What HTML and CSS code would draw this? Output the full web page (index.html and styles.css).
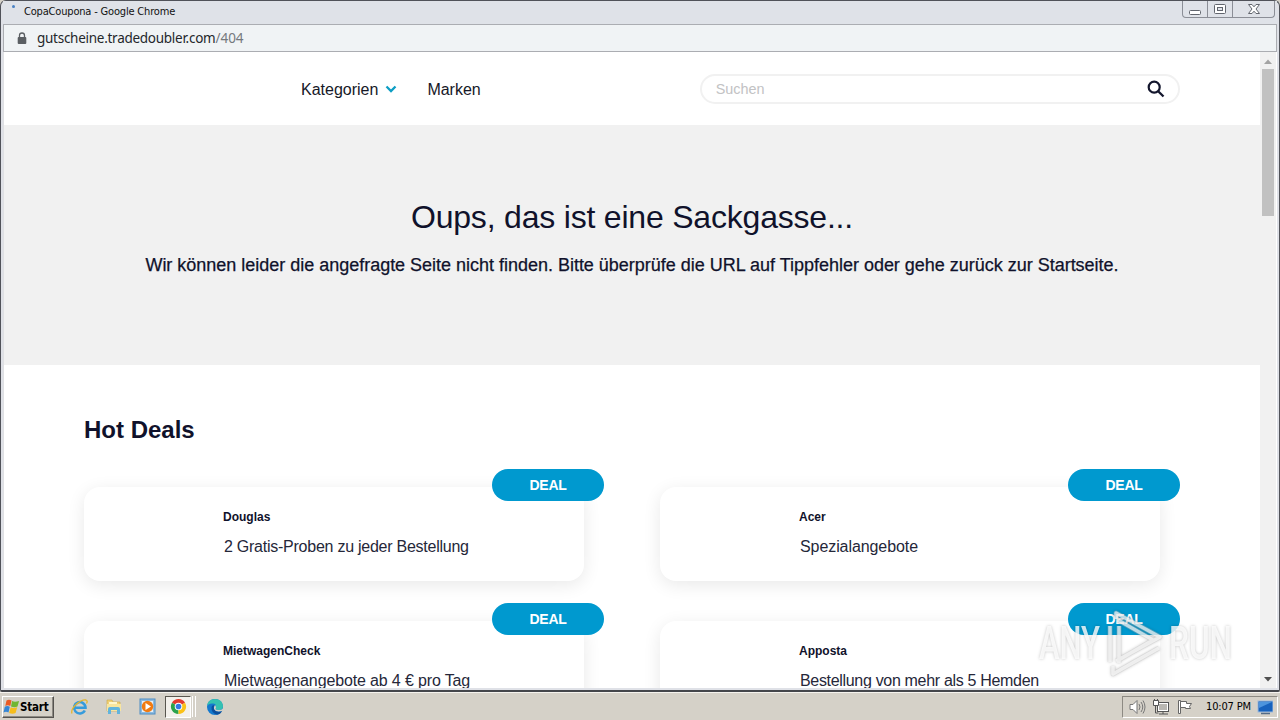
FILE: index.html
```html
<!DOCTYPE html>
<html lang="de">
<head>
<meta charset="utf-8">
<title>CopaCoupona</title>
<link rel="stylesheet" href="styles.css">
</head>
<body>
<div class="desktop">
  <div class="window">
    <div class="titlebar">
      <span class="spinner"></span>
      <span class="title">CopaCoupona - Google Chrome</span>
      <div class="controls">
        <span class="control"><svg width="14" height="14" viewBox="0 0 14 14"><rect x="1.500" y="8.500" width="11" height="4" rx="1" fill="#fff" stroke="#62666e"/></svg></span>
        <span class="control"><svg width="14" height="14" viewBox="0 0 14 14"><rect x="1.500" y="2.500" width="11" height="9" rx="1" fill="#fff" stroke="#62666e"/><rect x="4.500" y="5.500" width="5" height="3" fill="#e1e4ea" stroke="#62666e"/></svg></span>
        <span class="control control-close"><svg width="14" height="14" viewBox="0 0 14 14"><path d="M1.500 2.500h3.500l2 2.300 2-2.300h3.500L9 7l3.500 4.500H9L7 9.200 5 11.500H1.500L5 7z" fill="#fff" stroke="#62666e"/></svg></span>
      </div>
    </div>
    <div class="addressbar">
      <svg class="lock" width="10" height="13" viewBox="0 0 10 13"><path d="M2.500 6V3.500a2.500 2.500 0 0 1 5 0V6" fill="none" stroke="#5b5f63" stroke-width="1.300"/><rect x="0.700" y="5" width="8.600" height="7" rx="1" fill="#5b5f63"/></svg>
      <span class="host">gutscheine.tradedoubler.com</span><span class="path">/404</span>
    </div>
    <div class="viewport">
      <div class="page">
        <header class="nav">
          <a class="nav-link nav-categories">Kategorien</a>
          <svg class="chevron" width="12" height="8" viewBox="0 0 12 8"><path d="M1.500 1.500L6 6l4.500-4.500" fill="none" stroke="#0d9ec4" stroke-width="2.300"/></svg>
          <a class="nav-link nav-brands">Marken</a>
          <div class="search">
            <span>Suchen</span>
            <svg width="18" height="18" viewBox="0 0 18 18"><circle cx="7.200" cy="7.200" r="5.500" fill="none" stroke="#13162d" stroke-width="2.200"/><path d="M11.200 11.200l5.300 5.300" stroke="#13162d" stroke-width="2.300"/></svg>
          </div>
        </header>
        <section class="hero">
          <h1>Oups, das ist eine Sackgasse...</h1>
          <p>Wir können leider die angefragte Seite nicht finden. Bitte überprüfe die URL auf Tippfehler oder gehe zurück zur Startseite.</p>
        </section>
        <main class="deals">
          <h2>Hot Deals</h2>
          <div class="grid">
            <article class="card"><span class="badge">DEAL</span><h3>Douglas</h3><p class="t1">2 Gratis-Proben zu jeder Bestellung</p></article>
            <article class="card"><span class="badge">DEAL</span><h3>Acer</h3><p class="t2">Spezialangebote</p></article>
            <article class="card"><span class="badge">DEAL</span><h3>MietwagenCheck</h3><p class="t3">Mietwagenangebote ab 4 € pro Tag</p></article>
            <article class="card"><span class="badge">DEAL</span><h3>Apposta</h3><p class="t4">Bestellung von mehr als 5 Hemden</p></article>
          </div>
        </main>
      </div>
      <div class="scrollbar">
        <svg width="16" height="17" viewBox="0 0 16 17"><path d="M4 12l4-4.500 4 4.500z" fill="#a3a3a3"/></svg>
        <div class="thumb"></div>
        <svg class="down" width="16" height="17" viewBox="0 0 16 17"><path d="M4 6l4 4.500L12 6z" fill="#505050"/></svg>
      </div>
    </div>
  </div>
  <div class="taskbar">
    <div class="start">
      <svg width="17" height="16" viewBox="0 0 16 16"><path d="M3 1.500q2.500-1.500 5 0L6.800 7q-2.500-1.400-5 0z" fill="#ea5b24"/><path d="M8.600 2q2.500 1.500 7 0L14 7.500q-3 1.400-6.500 0z" fill="#72b632"/><path d="M1.300 7.800q2.500-1.500 5 0L5 13.500q-2.500-1.400-5 0z" fill="#3586d5"/><path d="M7.200 8.300q2.500 1.500 6.500 0l-1.600 5.700q-3 1.400-6.500 0z" fill="#f6bd1c"/></svg>
      <span>Start</span>
    </div>
    <div class="launch">
      <svg width="18" height="18" viewBox="0 0 18 18"><path d="M13.800 12.500A5.700 5.700 0 1 1 14.500 9.700H4.500" fill="none" stroke="#359bdc" stroke-width="2.600"/><path d="M1 15.500C-1 10 10 1 15 2q2 .6.500 3.500" fill="none" stroke="#e4b52d" stroke-width="1.300"/></svg>
      <svg width="18" height="18" viewBox="0 0 18 18"><path d="M2 2h5l1 2h7v9H2z" fill="#efd077" stroke="#cda842" stroke-width=".6"/><path d="M4 4h8v5H4z" fill="#fff6cb"/><path d="M2 6h14v7H2z" fill="#f8e59e"/><path d="M3 16v-5q0-2 2-2h8q2 0 2 2v5h-3v-4H6v4z" fill="#62b4dd"/></svg>
      <svg width="18" height="18" viewBox="0 0 18 18"><rect x="1" y="1" width="15" height="15" fill="#8ebbe0" stroke="#4f8ec3"/><rect x="3" y="3" width="11" height="11" fill="#e7f0f8"/><circle cx="8.500" cy="8.500" r="5.700" fill="#f17b12"/><path d="M6.500 5v7l5.500-3.500z" fill="#fff"/></svg>
    </div>
    <div class="task-active">
      <svg width="17" height="17" viewBox="0 0 18 18"><path d="M9 9L2.070 5A8 8 0 0 1 15.930 5z" fill="#e33b2e"/><path d="M9 9V17A8 8 0 0 1 2.070 5z" fill="#2ba24c"/><path d="M9 9L15.930 5A8 8 0 0 1 9 17z" fill="#fbc116"/><circle cx="9" cy="9" r="4" fill="#fff"/><circle cx="9" cy="9" r="3" fill="#3478e5"/></svg>
    </div>
    <span class="stack"></span><span class="stack stack-last"></span>
    <svg class="edge" width="18" height="18" viewBox="0 0 18 18"><circle cx="9" cy="9" r="8" fill="#1479ce"/><path d="M1 8Q2 1 9 1t8 7q0 4-4.500 4-3.500 0-2.500-2.500Q10.500 5 6 5.500 2 6 1 8z" fill="#35c1b1"/><path d="M5.500 9Q5 15 11 16.700 15 16 16 13q-6 2-8-2-.8-2 .5-4Q6 7 5.500 9z" fill="#0b4f9d"/><path d="M10 9.500Q8.500 12 12.500 12q3 0 4.500-1.500v2.300Q10 15 8 11q-.5-2 1-4 1 .5 1 2.500z" fill="#d3d0c6"/></svg>
    <div class="tray">
      <svg width="18" height="18" viewBox="0 0 18 18"><path d="M2 6.500h3l4-4v13l-4-4H2z" fill="#fff" stroke="#777"/><path d="M11 6q2 3 0 6M13 4q3.500 5 0 10M15 2.500q4 6.500 0 13" fill="none" stroke="#777"/></svg>
      <svg width="18" height="18" viewBox="0 0 18 18"><rect x="6.500" y="5.500" width="9" height="7" fill="#b9b7b2" stroke="#fff"/><rect x="5.500" y="4.500" width="11" height="9" fill="none" stroke="#555"/><path d="M7 16h9M11 13v3M3.500 7v8h3" fill="none" stroke="#555"/><path d="M1.500 2.500h5v5h-5zM2.500 1v2M5.500 1v2" fill="#fff" stroke="#555"/></svg>
      <svg width="18" height="18" viewBox="0 0 18 18"><path d="M2.500 2.500h2v13h-2z" fill="#fff" stroke="#666"/><path d="M4.500 3.500h6v2h5l-2 3 1 2h-5v-1h-5z" fill="#fff" stroke="#666"/></svg>
      <span class="clock">10:07 PM</span>
      <svg width="16" height="16" viewBox="0 0 16 16"><rect x="1" y="2" width="15" height="11" fill="#1762bd" stroke="#9fbbdc"/><path d="M2 3h13L2 9z" fill="#4c94dd"/><path d="M4 14.500h9" stroke="#536b86" stroke-width="1.500"/></svg>
    </div>
  </div>
  <div class="watermark">
    <svg width="206" height="76" viewBox="0 0 206 76">
      <g class="mark-text"><text x="5" y="53" textLength="61" lengthAdjust="spacingAndGlyphs">ANY</text><text x="135" y="53" textLength="63" lengthAdjust="spacingAndGlyphs">RUN</text></g>
      <g class="mark-shade"><path d="M76 20v36M85 57V20M82 13V7l44 24-44 24M84 14l35 20-36 21M79 60v8l46-26"/></g>
      <g class="mark-light"><path d="M76 20v36M85 57V20M82 13V7l44 24-44 24M84 14l35 20-36 21M79 60v8l46-26"/></g>
    </svg>
  </div>
</div>
</body>
</html>
```
FILE: styles.css
```css
* { box-sizing: border-box; }
body { margin: 0; font-family: "Liberation Sans", Arial, sans-serif; color: #10122b; }
svg { display: block; flex: none; }
h1, h2, h3, p { margin: 0; }
.desktop { position: relative; width: 1280px; height: 720px; overflow: hidden; background: #d5d1c8; display: flex; flex-direction: column; }
.window { height: 692px; border: 1px solid #505259; border-bottom: 2px solid #44464b; border-radius: 6px 6px 2px 2px; background: #dfe1e7; padding: 0 2px 2px; display: flex; flex-direction: column; }
.titlebar { height: 23px; flex: none; display: flex; align-items: flex-start; background: #dfe2e8; }
.spinner { width: 3px; height: 3px; margin: 4px 0 0 9px; border-radius: 50%; background: #4a82c4; }
.title { margin-left: 9px; font: 11px/22px "DejaVu Sans Condensed", "DejaVu Sans", sans-serif; letter-spacing: -.18px; color: #111; white-space: nowrap; }
.controls { margin: 0 2px 0 auto; display: flex; height: 17px; border: 1px solid #8b8e96; border-top: 0; border-radius: 0 0 4px 4px; overflow: hidden; }
.control { width: 25px; display: flex; justify-content: center; align-items: center; border-right: 1px solid #8b8e96; }
.control-close { width: 41px; border-right: 0; }
.addressbar { height: 28px; flex: none; display: flex; align-items: center; background: #f0f3f5; border: 1px solid #abadb2; padding-left: 13px; font: 14px/26px "Noto Sans", sans-serif; white-space: nowrap; }
.lock { margin-right: 10px; }
.host { color: #24272b; font-size: 13.500px; letter-spacing: -.27px; }
.path { color: #75797e; font-size: 13.500px; }
.viewport { flex: 1; min-height: 0; display: flex; background: #fff; border-left: 1px solid #dfe0e3; overflow: hidden; }
.page { width: 1256px; overflow: hidden; flex: none; }
.nav { height: 73px; display: flex; align-items: center; padding-left: 297px; font-size: 16px; color: #161827; }
.nav-link { padding-top: 2px; }
.chevron { margin: 0 30px 0 7px; }
.search { width: 480px; height: 30px; margin-left: 219px; border: 2px solid #f1f1f1; border-radius: 15px; display: flex; align-items: center; justify-content: space-between; padding: 0 13px 0 14px; font-size: 14.400px; color: #c2c2c4; }
.hero { height: 240px; background: #f1f1f1; text-align: center; padding-top: 72px; white-space: nowrap; }
.hero h1 { font-size: 32px; line-height: 40px; font-weight: 400; letter-spacing: -.2px; }
.hero p { font-size: 18px; line-height: 28px; margin-top: 14px; letter-spacing: -.014px; -webkit-text-stroke: .25px #10122b; }
.deals { padding: 50px 80px 0; }
.deals h2 { font-size: 24px; line-height: 30px; }
.grid { margin-top: 42px; display: grid; grid-template-columns: 500px 500px; column-gap: 76px; row-gap: 40px; }
.card { position: relative; height: 94px; background: #fff; border-radius: 16px; box-shadow: 0 4px 18px rgba(0, 0, 0, .09); padding: 22px 0 0 139px; }
.badge { position: absolute; right: -20px; top: -18.500px; width: 112px; height: 32px; border-radius: 16px; background: #0099cf; color: #fff; font-size: 14px; line-height: 33px; letter-spacing: -.3px; font-weight: 700; text-align: center; }
.card h3 { font-size: 12px; line-height: 16px; }
.card p { font-size: 16px; line-height: 24px; margin: 10px 0 0 1px; color: #252739; white-space: nowrap; }
.card .t1 { letter-spacing: -.25px; }
.card .t2 { letter-spacing: -.08px; }
.card .t3 { letter-spacing: -.14px; }
.card .t4 { letter-spacing: -.32px; }
.scrollbar { width: 16px; background: #f1f1f1; display: flex; flex-direction: column; align-items: center; }
.thumb { width: 12px; height: 147px; background: #c1c1c1; flex: none; }
.down { margin-top: auto; }
.taskbar { height: 28px; border-top: 1px solid #f5f3ee; display: flex; align-items: center; padding: 2px 2px 2px; }
.start { width: 52px; height: 22px; border: 1px solid; border-color: #fff #55534f #55534f #fff; box-shadow: inset -1px -1px #8d8a83; display: flex; align-items: center; font: bold 11.500px/20px "DejaVu Sans Condensed", sans-serif; letter-spacing: -.2px; color: #000; }
.launch { display: flex; gap: 16px; margin-left: 17px; }
.task-active { width: 26px; height: 22px; margin-left: 8px; background: #f3f0eb; border: 1px solid; border-color: #59564f #fff #fff #59564f; display: flex; align-items: center; justify-content: center; }
.stack { width: 2px; height: 21px; border-right: 1px solid #fff; }
.stack-last { margin-left: 1px; }
.edge { margin-left: 10px; }
.tray { margin-left: auto; height: 22px; width: 156px; border: 1px solid; border-color: #8d8a83 #fff #fff #8d8a83; display: flex; align-items: center; padding-left: 5px; gap: 6px; }
.clock { font: 11px/20px "DejaVu Sans Condensed", sans-serif; letter-spacing: -.15px; color: #000; margin-left: 6px; white-space: nowrap; }
.watermark { position: absolute; left: 1034px; top: 606px; filter: drop-shadow(0 0 1.500px rgba(0, 0, 0, .28)); }
.mark-text { font: 500 46px Roboto, sans-serif; fill: #fff; fill-opacity: .8; }
.mark-shade, .mark-light { fill: none; stroke-linejoin: round; }
.mark-shade { stroke: #c8c8c8; stroke-opacity: .35; stroke-width: 5; }
.mark-light { stroke: #fff; stroke-opacity: .65; stroke-width: 3.500; }
```
